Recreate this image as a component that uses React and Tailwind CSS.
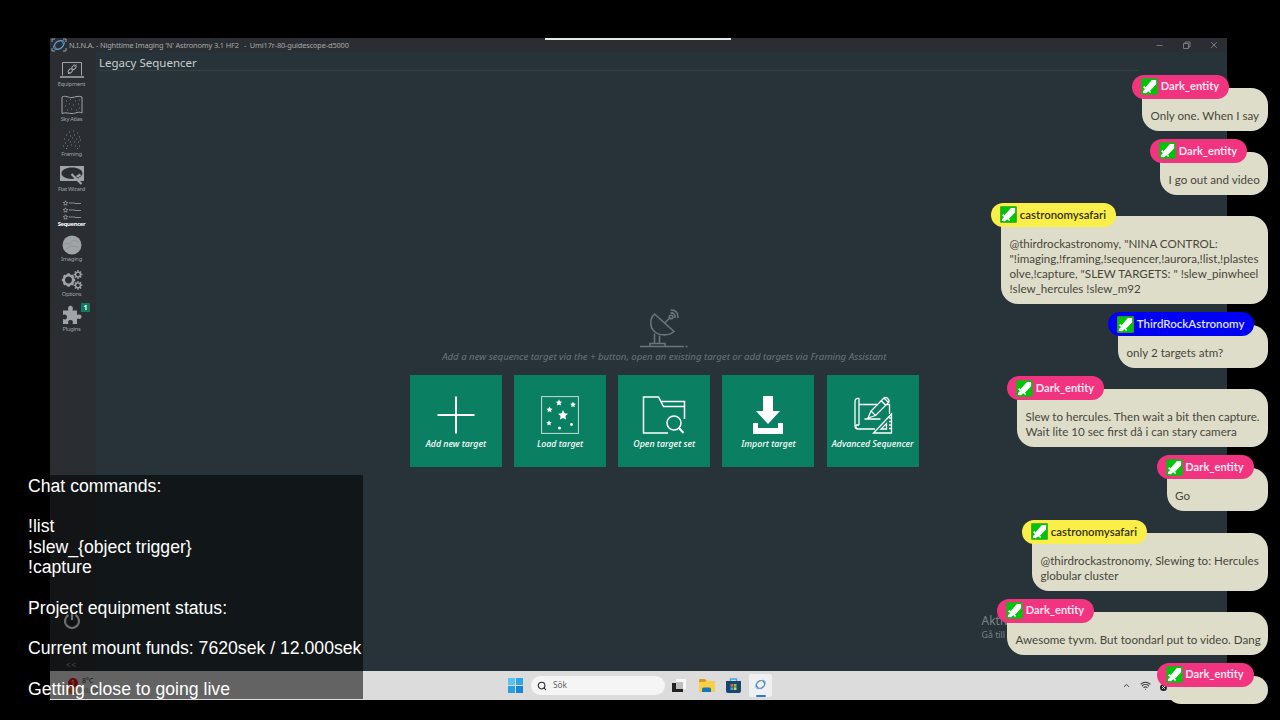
import clsx from 'clsx';
import { Minus, X, Search, ChevronUp, Wifi } from 'lucide-react';

const navItems = [
  { name: 'Equipment', icon: EquipmentIcon },
  { name: 'Sky Atlas', icon: AtlasIcon },
  { name: 'Framing', icon: FramingIcon },
  { name: 'Flat Wizard', icon: FlatIcon },
  { name: 'Sequencer', icon: SequencerIcon, active: true },
  { name: 'Imaging', icon: ImagingIcon },
  { name: 'Options', icon: OptionsIcon },
  { name: 'Plugins', icon: PluginsIcon, badge: 1 },
];

const actions = [
  { name: 'Add new target', icon: PlusIcon },
  { name: 'Load target', icon: StarsIcon },
  { name: 'Open target set', icon: FolderIcon },
  { name: 'Import target', icon: ImportIcon },
  { name: 'Advanced Sequencer', icon: BlueprintIcon },
];

const pink = 'bg-[#f0347f] text-[#ffe3ef] font-bold text-[11.1px] w-[97px]';
const yellow = 'bg-[#faee48] text-[#35320f] font-semibold text-[11.4px] w-[125px]';
const blue = 'bg-[#0000f2] text-[#dfe0ff] font-semibold text-[11.5px] w-[145.5px]';

const messages = [
  { user: 'Dark_entity', pill: pink, width: 'w-[126px]', lines: ['Only one. When I say'] },
  { user: 'Dark_entity', pill: pink, width: 'w-[108px]', lines: ['I go out and video'] },
  {
    user: 'castronomysafari',
    pill: yellow,
    width: 'w-[267px]',
    lines: [
      '@thirdrockastronomy, "NINA CONTROL:',
      '"!imaging,!framing,!sequencer,!aurora,!list,!plastes',
      'olve,!capture, "SLEW TARGETS: " !slew_pinwheel',
      '!slew_hercules !slew_m92',
    ],
  },
  { user: 'ThirdRockAstronomy', pill: blue, width: 'w-[150px]', lines: ['only 2 targets atm?'] },
  {
    user: 'Dark_entity',
    pill: pink,
    width: 'w-[251px]',
    lines: ['Slew to hercules. Then wait a bit then capture.', 'Wait lite 10 sec first då i can stary camera'],
  },
  { user: 'Dark_entity', pill: pink, width: 'w-[101.5px]', lines: ['Go'] },
  {
    user: 'castronomysafari',
    pill: yellow,
    width: 'w-[236px]',
    lines: ['@thirdrockastronomy, Slewing to: Hercules', 'globular cluster'],
  },
  { user: 'Dark_entity', pill: pink, width: 'w-[261px]', lines: ['Awesome tyvm. But toondarl put to video. Dang'] },
];

const commands = [
  'Chat commands:',
  '',
  '!list',
  '!slew_{object trigger}',
  '!capture',
  '',
  'Project equipment status:',
  '',
  'Current mount funds: 7620sek / 12.000sek',
  '',
  'Getting close to going live',
];

function EquipmentIcon() {
  return (
    <svg width="26" height="18" viewBox="0 0 26 18" fill="none" stroke="currentColor">
      <path d="M3.500 14.500V1.500h19v13" />
      <path d="M1 16h24" strokeWidth="1.600" />
      <path d="M9 13l2-2M15.500 5.500l2-2" />
      <ellipse cx="11.300" cy="10" rx="1.700" ry="2.500" transform="rotate(40 11.300 10)" />
      <ellipse cx="15" cy="6.300" rx="1.700" ry="2.500" transform="rotate(40 15 6.300)" />
    </svg>
  );
}

function AtlasIcon() {
  return (
    <svg width="22" height="20" viewBox="0 0 22 20" fill="none" stroke="currentColor">
      <path d="M1 2c4-2 6 1 10 .5s6-2 10-.5v16c-4-2-6 .5-10 .5S5 17 1 18.500z" />
      <path
        d="M5 6h1M9 4.500h1M14 6h1M18 5h1M4 11h1M8 9h1M12 10h1M17 9h1M6 15h1M10 14h1M15 15h1M18 13h1"
        opacity=".7"
      />
    </svg>
  );
}

function FramingIcon() {
  return (
    <svg width="20" height="20" viewBox="0 0 20 20" fill="none" stroke="currentColor" opacity=".75">
      <path d="M7 2h1M11 1h1M15 3h1M4 5h1M8 6h1M12 5h1M17 7h1M2 9h1M6 10h1M10 8h1M14 9h1M3 13h1M8 12h1M12 12h1M16 12h1M18 10h1M1 16h1M5 16h1M9 15h1M13 16h1M17 16h1M4 18.500h1M15 18.500h1" />
    </svg>
  );
}

function FlatIcon() {
  return (
    <svg width="26" height="20" viewBox="0 0 26 20">
      <path
        fill="currentColor"
        fillRule="evenodd"
        d="M1 1h24v15H1zM13 2.500c-6 0-10.500 2.500-10.500 5.800S7 14 13 14s10.500-2.500 10.500-5.700S19 2.500 13 2.500z"
      />
      <path d="M12.500 9l10 10M15 13.500l6.500-4" stroke="currentColor" strokeWidth="2.200" fill="none" />
      <path d="M16 10.500l3 3" stroke="#2a2d31" strokeWidth=".8" />
    </svg>
  );
}

function SequencerIcon() {
  return (
    <svg width="20" height="20" viewBox="0 0 20 20" fill="none" stroke="currentColor" strokeWidth=".8">
      {[3, 10, 17].map((y) => (
        <g key={y}>
          <path transform={`translate(0 ${y - 3})`} d="M3.500.8l.7 1.500 1.600.2-1.200 1.100.3 1.600-1.400-.8-1.400.8.3-1.600L1.200 2.500l1.600-.2z" />
          <path d={`M7 ${y}h6`} strokeDasharray="1.600 .5" strokeWidth="1.500" opacity=".7" />
          <path d={`M13 ${y + 0.5}h6`} />
        </g>
      ))}
    </svg>
  );
}

function ImagingIcon() {
  return (
    <svg width="20" height="20" viewBox="0 0 20 20">
      <circle cx="10" cy="10" r="9.500" fill="currentColor" />
      <path d="M2 9l6-1 4-3 5 2M4 14l5-3 8 1" stroke="#85898b" strokeWidth=".6" fill="none" />
    </svg>
  );
}

function Gear({ x, y, r, hole }) {
  return (
    <g transform={`translate(${x} ${y})`} stroke="currentColor" fill="none">
      <circle r={r} strokeWidth={r - hole} />
      {[0, 45, 90, 135].map((a) => (
        <path
          key={a}
          d={`M0 ${-r - 2}v1.800M0 ${r + 2}v-1.800`}
          transform={`rotate(${a})`}
          strokeWidth={r > 3 ? 2.5 : 1.4}
        />
      ))}
    </g>
  );
}

function OptionsIcon() {
  return (
    <svg width="22" height="20" viewBox="0 0 22 20">
      <Gear x={7.5} y={10} r={4.7} hole={2.2} />
      <Gear x={17} y={4.5} r={2.4} hole={1} />
      <Gear x={17} y={15.3} r={2.4} hole={1} />
    </svg>
  );
}

function PluginsIcon() {
  return (
    <svg width="20" height="20" viewBox="0 0 20 20" fill="currentColor">
      <path d="M1 5.500h5.500C5.500 3 6.500.8 8.500.8s3 2.200 2 4.700H15V10c2.500-1 4.500-.3 4.500 1.700s-2 2.800-4.500 1.800V19h-4.500c1-2.500 0-4-2-4s-3 1.500-2 4H1v-5c2.500 1 4 0 4-2s-1.500-3-4-2z" />
    </svg>
  );
}

function PlusIcon() {
  return (
    <svg width="38" height="38" viewBox="0 0 38 38" stroke="currentColor" strokeWidth="2">
      <path d="M19 .5v37M.5 19h37" />
    </svg>
  );
}

const star = 'M0-5l1.500 3.300 3.500.4-2.600 2.400.7 3.500L0 2.900l-3.100 1.700.7-3.500L-5-1.300l3.500-.4z';

function StarsIcon() {
  return (
    <svg width="38" height="38" viewBox="0 0 38 38">
      <rect x=".6" y=".6" width="36.800" height="36.800" fill="none" stroke="currentColor" opacity=".75" />
      <g fill="currentColor">
        <path d={star} transform="translate(22 19)" />
        <path d={star} transform="translate(18 6.500) scale(.65)" />
        <path d={star} transform="translate(32 8.500) scale(.58)" />
        <path d={star} transform="translate(8.500 13.500) scale(.62)" />
        <path d={star} transform="translate(8 27) scale(.55)" />
        <circle cx="18.500" cy="32" r="1.500" />
        <circle cx="30.500" cy="28.500" r="1.400" />
      </g>
    </svg>
  );
}

function FolderIcon() {
  return (
    <svg width="44" height="38" viewBox="0 0 44 38" fill="none" stroke="currentColor" strokeWidth="1.500">
      <path d="M26 37H1.500V1h15l5 9.500H42M18.500 5.500h24V23" />
      <circle cx="32" cy="27" r="7" />
      <path d="M37 32l4.500 5" strokeWidth="2" />
    </svg>
  );
}

function ImportIcon() {
  return (
    <svg width="32" height="38" viewBox="0 0 32 38" fill="currentColor">
      <path d="M11 0h10v15h7L16 28 4 15h7zM1 27h5v5h20v-5h5v11H1z" />
    </svg>
  );
}

function BlueprintIcon() {
  return (
    <svg width="40" height="38" viewBox="0 0 40 38" fill="none" stroke="currentColor" strokeWidth="1.300">
      <path d="M6 29V2.500c-3-.5-4 1-4 3V30c0 2 1 3 3 3h17M6 29H3.500c-1 1-1 3.500 1.500 4M6 8.500h18M34 8.500h2.500V18" />
      <path d="M15 22l3-7L31 2l4.500 4.500-13 13zM28 4.500l5 5M18 15l4.500 4.500M31 2c2-2 6.500 2 4.500 4.500M11.500 23h16" />
      <path d="M38.500 18v19H20.500zM33.500 27.500V33H28zM38 22h-2M38 25.500h-2M38 29h-2M38 32.500h-2" />
    </svg>
  );
}

function DishIcon() {
  return (
    <svg width="50" height="40" viewBox="0 0 50 40" fill="none" stroke="currentColor" strokeWidth="1.600">
      <path d="M1 38.500h44M46.500 38.500h2M11 38v-2.500h15V38M15.500 35V25.500M20.500 35v-7.500" />
      <path d="M15.500 6c-5 5-5 13 0 17.500s14.500 4.500 19.500 0zM25.500 15l6-5.500" />
      <circle cx="32" cy="9" r="1.800" />
      <path d="M31.500 5c3-.5 5 1.500 4.500 5M31.500 2c5-.5 8 3 7.500 8" />
    </svg>
  );
}

function SwordBadge() {
  return (
    <svg className="shrink-0" width="17" height="17" viewBox="0 0 18 18">
      <rect x=".4" y=".4" width="17.200" height="17.200" rx="1" fill="#00c40a" stroke="#4f9a2a" strokeWidth=".8" />
      <path
        d="M16 2v4.500l-6.500 7 1.300 1.300-1.200 1.200-2-2-2.300 2.200L2 16l.2-2.300 2-1.800-2-2L3.500 8.500l1.300 1.200L11.500 2z"
        fill="#fff"
      />
    </svg>
  );
}

function OrbitIcon({ size }) {
  return (
    <svg width={size} height={size} viewBox="0 0 16 16" fill="none">
      <ellipse cx="8" cy="8" rx="5.200" ry="4.500" transform="rotate(-35 8 8)" stroke="#3b82b8" strokeWidth="1.600" />
      <ellipse cx="8" cy="8" rx="7" ry="4" transform="rotate(-35 8 8)" stroke="#79a8ce" strokeWidth=".9" />
    </svg>
  );
}

function TitleBar() {
  return (
    <div className="h-[14px] shrink-0 flex items-center bg-[#2a2d31] text-[#a6aaac]">
      <div className="relative flex ml-[1px] w-[16px] justify-center">
        <OrbitIcon size={14} />
        <svg className="absolute inset-0" width="16" height="14" fill="none" stroke="#9da3a6">
          <path d="M1 4V1h3M12 1h3v3M1 10v3h3M12 13h3v-3" />
        </svg>
      </div>
      <span className="ml-[2px] pt-px text-[7.400px] tracking-[-0.150px] whitespace-pre">
        N.I.N.A. - Nighttime Imaging 'N' Astronomy 3.1 HF2   -  Umi17r-80-guidescope-d5000
      </span>
      <div className="ml-auto mr-[8.500px] flex items-center gap-[18px] text-[#8a8e90]">
        <Minus size={9} strokeWidth={2} />
        <svg width="9" height="9" viewBox="0 0 9 9" fill="none" stroke="currentColor" strokeWidth=".8">
          <path d="M1.500 2.500h5v5h-5zM3 2.500V1h5v5H6.500" />
        </svg>
        <X size={10} strokeWidth={2} />
      </div>
    </div>
  );
}

function Sidebar() {
  return (
    <nav className="w-[46px] shrink-0 flex flex-col items-center pt-[7.500px] bg-[#2a2d31] text-[#a0a4a6]">
      {navItems.map(({ name, icon: Icon, active, badge }) => (
        <div key={name} className="relative h-[35px] w-full flex flex-col items-center pr-[3px]">
          <div className="h-[21px] flex items-center justify-center">
            <Icon />
          </div>
          <span
            className={clsx(
              'text-[5.800px] leading-[7px] whitespace-nowrap',
              active ? 'font-bold text-white tracking-[-0.3px]' : 'tracking-[-0.270px]'
            )}
          >
            {name}
          </span>
          {badge && (
            <span className="absolute left-[31px] top-[-2px] w-[9px] h-[9px] bg-[#107a60] text-white text-[7px] leading-[9px] font-bold text-center">
              {badge}
            </span>
          )}
        </div>
      ))}
      {/* Shutdown, status row and collapse */}
      <div className="mt-auto mb-[2px] pr-[3px] flex flex-col items-center">
        <svg width="18" height="19" viewBox="0 0 18 19" fill="none" stroke="#f2f4f5" strokeWidth="2.200">
          <path d="M5.500 4a7 7 0 1 0 7 0M9 1v8" />
        </svg>
        <svg className="mt-[13px]" width="38" height="12" viewBox="0 0 38 12" fill="none" stroke="#5c6062">
          <path d="M1 6h4M14 4h4v5h-4zM20 2h4v4h-4z" />
          <circle cx="33" cy="6" r="4" />
        </svg>
        <span className="mt-[5px] text-[8px] leading-[9px] tracking-[1px]">&lt;&lt;</span>
      </div>
    </nav>
  );
}

function Sequencer() {
  return (
    <main className="relative flex-1 flex flex-col bg-[#273338]">
      <h1 className="ml-[3px] mr-[89px] h-[19px] border-b border-[#36403f] text-[11.500px] leading-[22px] text-[#c8cdcf]">
        Legacy Sequencer
      </h1>
      <div className="mt-[237px] flex flex-col items-center pl-[5.500px] text-[#69757a]">
        <DishIcon />
        <p className="mt-[2px] text-[9.600px] leading-[14px] italic whitespace-nowrap">
          Add a new sequence target via the + button, open an existing target or add targets via Framing Assistant
        </p>
        <div className="mt-[11px] flex gap-[12.200px]">
          {actions.map(({ name, icon: Icon }) => (
            <button
              key={name}
              className="w-[92px] h-[92px] pt-[21px] flex flex-col items-center bg-[#0a7f62] text-white"
            >
              <Icon />
              <span className="mt-[4px] text-[8.800px] leading-[13px] italic font-medium whitespace-nowrap">{name}</span>
            </button>
          ))}
        </div>
      </div>
      <div className="absolute left-[885.500px] bottom-[30.500px] text-[#78848a] whitespace-nowrap">
        <p className="text-[12px] leading-[16px]">Aktivera Windows</p>
        <p className="text-[8.800px] leading-[12px]">Gå till Inställningar</p>
      </div>
    </main>
  );
}

function Taskbar() {
  return (
    <footer className="relative h-[29px] shrink-0 flex items-center bg-[#dcdcdc]">
      <div className="ml-[18px] w-[440px] flex items-center gap-[4px] text-[7px] leading-[10px] text-[#333]">
        <div className="flex flex-col items-center">
          <span className="w-[10px] h-[10px] rounded-full bg-[#e11818] text-white text-center">1</span>
          <span className="w-[10px] h-[6px] rounded-full bg-[#e8752c]" />
        </div>
        <div className="flex flex-col pt-px">
          <span>8°C</span>
          <span className="text-[#777]">Klart</span>
        </div>
      </div>
      <div className="flex items-center">
        <svg width="15" height="15" viewBox="0 0 15 15">
          <path d="M0 0h7v7H0z" fill="#58c4f4" />
          <path d="M8 0h7v7H8z" fill="#2ea6e8" />
          <path d="M0 8h7v7H0z" fill="#2b9fe4" />
          <path d="M8 8h7v7H8z" fill="#1a84d6" />
        </svg>
        <div className="ml-[8px] w-[134px] h-[19px] rounded-full bg-[#f5f5f5] flex items-center pl-[6px] gap-[6px] text-[#666]">
          <Search size={10} strokeWidth={2.5} className="text-[#222]" />
          <span className="text-[8.300px]">Sök</span>
        </div>
        <svg className="ml-[7px]" width="14" height="14" viewBox="0 0 14 14">
          <path d="M4 0h10v10H4z" fill="#f6f6f6" />
          <path d="M0 4h11v9H0z" fill="#222" />
          <path d="M4 3h7v7H4z" fill="#bdbdbd" />
        </svg>
        <svg className="ml-[13px]" width="16" height="14" viewBox="0 0 16 14">
          <path d="M0 1q0-1 1-1h5l2 2h7q1 0 1 1v10H0z" fill="#f9cf45" />
          <path d="M0 1q0-1 1-1h5l1.500 1.500L6 3H0z" fill="#d99a1d" />
          <path d="M3 10q0-1.500 1.500-1.500h6q1.500 0 1.500 1.500v3H3z" fill="#1576b8" />
        </svg>
        <svg className="ml-[11px]" width="15" height="15" viewBox="0 0 15 15">
          <path d="M4.500 4V1h6v3" fill="none" stroke="#42a4d8" strokeWidth="1.300" />
          <path d="M0 3h15v10q0 2-2 2H2q-2 0-2-2z" fill="#17466f" />
          <path d="M4.500 6h2.700v2.700H4.500z" fill="#e9673e" />
          <path d="M7.800 6h2.700v2.700H7.800z" fill="#8cc34b" />
          <path d="M4.500 9.300h2.700V12H4.500z" fill="#35a9e1" />
          <path d="M7.800 9.300h2.700V12H7.800z" fill="#f5c83b" />
        </svg>
        <div className="ml-[8px] w-[23px] h-[23px] rounded-[2px] bg-[#eef0f2] flex flex-col items-center">
          <div className="h-[21px] flex items-center">
            <OrbitIcon size={13} />
          </div>
          <span className="w-[10px] h-[2px] rounded-full bg-[#2f7cc4]" />
        </div>
      </div>
      {/* Tray */}
      <div className="ml-auto mr-[60px] flex items-center gap-[9px] text-[#333]">
        <ChevronUp size={9} strokeWidth={2.5} />
        <Wifi size={11} strokeWidth={2.2} />
        <svg className="mt-[3px]" width="7" height="7" viewBox="0 0 7 7">
          <circle cx="3.500" cy="3.500" r="3.500" fill="#222" />
          <path d="M2 2l3 3M5 2L2 5" stroke="#fff" strokeWidth=".8" />
        </svg>
      </div>
    </footer>
  );
}

function Message({ user, pill, width, lines, last }) {
  return (
    <div className={clsx('flex flex-col', width)}>
      <div
        className={clsx(
          'relative z-10 ml-[-9.700px] h-[24px] rounded-full flex items-center pl-[9px] gap-[2.500px] whitespace-nowrap',
          pill
        )}
      >
        <SwordBadge />
        {user}
      </div>
      <div
        className={clsx(
          'mt-[-11px] pl-[8.500px] text-[11.600px] leading-[15px] text-[#48463a] whitespace-nowrap',
          last
            ? 'h-[28px] overflow-hidden rounded-b-[18px] rounded-tr-[18px] bg-[#deddca]'
            : 'pt-[20px] pb-[8px] rounded-b-[17px] rounded-tr-[17px] bg-[#deddca]'
        )}
      >
        {lines.map((line) => (
          <p key={line}>{line}</p>
        ))}
      </div>
    </div>
  );
}

export default function App() {
  return (
    <div className="relative w-[1280px] h-[720px] overflow-hidden bg-black font-['Noto_Sans',sans-serif]">
      <div className="pt-[38px] pl-[50px]">
        <div className="w-[1177px] h-[662px] flex flex-col">
          <TitleBar />
          <div className="flex-1 flex">
            <Sidebar />
            <Sequencer />
          </div>
          <Taskbar />
        </div>
      </div>
      <div className="absolute left-[545px] top-[38px] w-[186px] h-[2px] bg-[#e8e8e8]" />

      {/* Stream info */}
      <div className="absolute left-0 top-[475px] w-[363px] h-[224px] pl-[28px] pt-[0.500px] bg-black/55 text-white text-[17.650px] leading-[20.350px] font-['Liberation_Sans',sans-serif] whitespace-pre">
        {commands.map((line, i) => (
          <p key={i} className="h-[20.350px]">
            {line}
          </p>
        ))}
      </div>

      {/* Chat */}
      <div className="absolute right-[12px] top-[74.700px] flex flex-col items-end gap-[8.150px] font-['Lato',sans-serif]">
        {messages.map((message, i) => (
          <Message key={i} {...message} />
        ))}
        <Message user="Dark_entity" pill={pink} width="w-[101.5px]" lines={[]} last />
      </div>
    </div>
  );
}
